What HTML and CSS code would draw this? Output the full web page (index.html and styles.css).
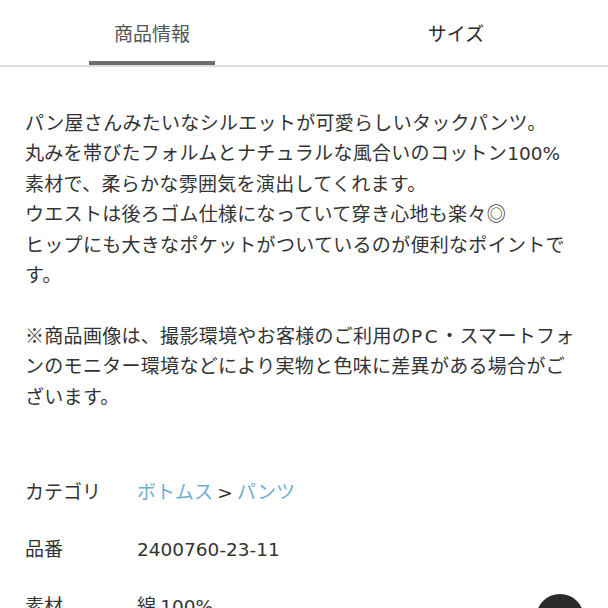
FILE: index.html
```html
<!DOCTYPE html>
<html lang="ja">
<head>
<meta charset="utf-8">
<title>商品情報</title>
<link rel="stylesheet" href="styles.css">
</head>
<body>
<div class="page">
  <nav class="tabs">
    <div class="tab active"><span class="tab-label">商品情報</span><span class="tab-bar"></span></div>
    <div class="tab"><span class="tab-label">サイズ</span></div>
  </nav>
  <section class="content">
    <p class="desc">パン屋さんみたいなシルエットが可愛らしいタックパンツ。<br>丸みを帯びたフォルムとナチュラルな風合いのコットン<span class="latin">100%</span>素材で、柔らかな雰囲気を演出してくれます。<br>ウエストは後ろゴム仕様になっていて穿き心地も楽々◎<br>ヒップにも大きなポケットがついているのが便利なポイントです。<br><br>※商品画像は、撮影環境やお客様のご利用の<span class="latin pc">PC</span>・スマートフォンのモニター環境などにより実物と色味に差異がある場合がございます。</p>
    <dl class="specs">
      <div class="spec-row"><dt>カテゴリ</dt><dd><a class="link">ボトムス</a> <span class="latin">&gt;</span> <a class="link">パンツ</a></dd></div>
      <div class="spec-row"><dt>品番</dt><dd><span class="latin">2400760-23-11</span></dd></div>
      <div class="spec-row"><dt>素材</dt><dd>綿 <span class="latin">100%</span></dd></div>
    </dl>
  </section>
  <div class="fab"></div>
</div>
</body>
</html>
```
FILE: styles.css
```css
html, body {
  margin: 0;
  padding: 0;
  background: #ffffff;
}
.page {
  position: relative;
  width: 608px;
  height: 608px;
  overflow: hidden;
  font-family: "Noto Sans CJK JP", "Noto Sans", sans-serif;
  color: #333333;
}
.tabs {
  display: flex;
  height: 65px;
  border-bottom: 2px solid #dcdcdc;
}
.tab {
  flex: 1;
  display: flex;
  flex-direction: column;
  align-items: center;
  justify-content: flex-end;
  font-size: 19px;
  color: #2a2a2a;
}
.tab-label {
  line-height: 26px;
  margin-bottom: 19px;
}
.tab.active {
  color: #555555;
}
.tab.active .tab-label {
  margin-bottom: 15px;
}
.tab-bar {
  display: block;
  width: 126px;
  height: 4px;
  background: #6d6d6d;
}
.content {
  padding: 40px 30px 0 25px;
}
.desc {
  margin: 0;
  font-size: 19px;
  line-height: 30.4px;
  letter-spacing: 0.3px;
  color: #333333;
}
.latin {
  font-family: "DejaVu Sans", "Liberation Sans", sans-serif;
  font-size: 18.5px;
  line-height: 1;
  letter-spacing: 0;
}
.pc {
  letter-spacing: 2.5px;
}
.specs {
  margin: 51px 0 0 0;
  padding: 0;
}
.spec-row {
  display: grid;
  grid-template-columns: 112px 1fr;
  height: 57px;
  align-items: center;
  font-size: 19px;
}
.spec-row dt, .spec-row dd {
  margin: 0;
}
.link {
  color: #6fb0d2;
}
.fab {
  position: absolute;
  left: 536px;
  top: 594px;
  width: 48px;
  height: 48px;
  border-radius: 50%;
  background: #2b2b2b;
}
```
